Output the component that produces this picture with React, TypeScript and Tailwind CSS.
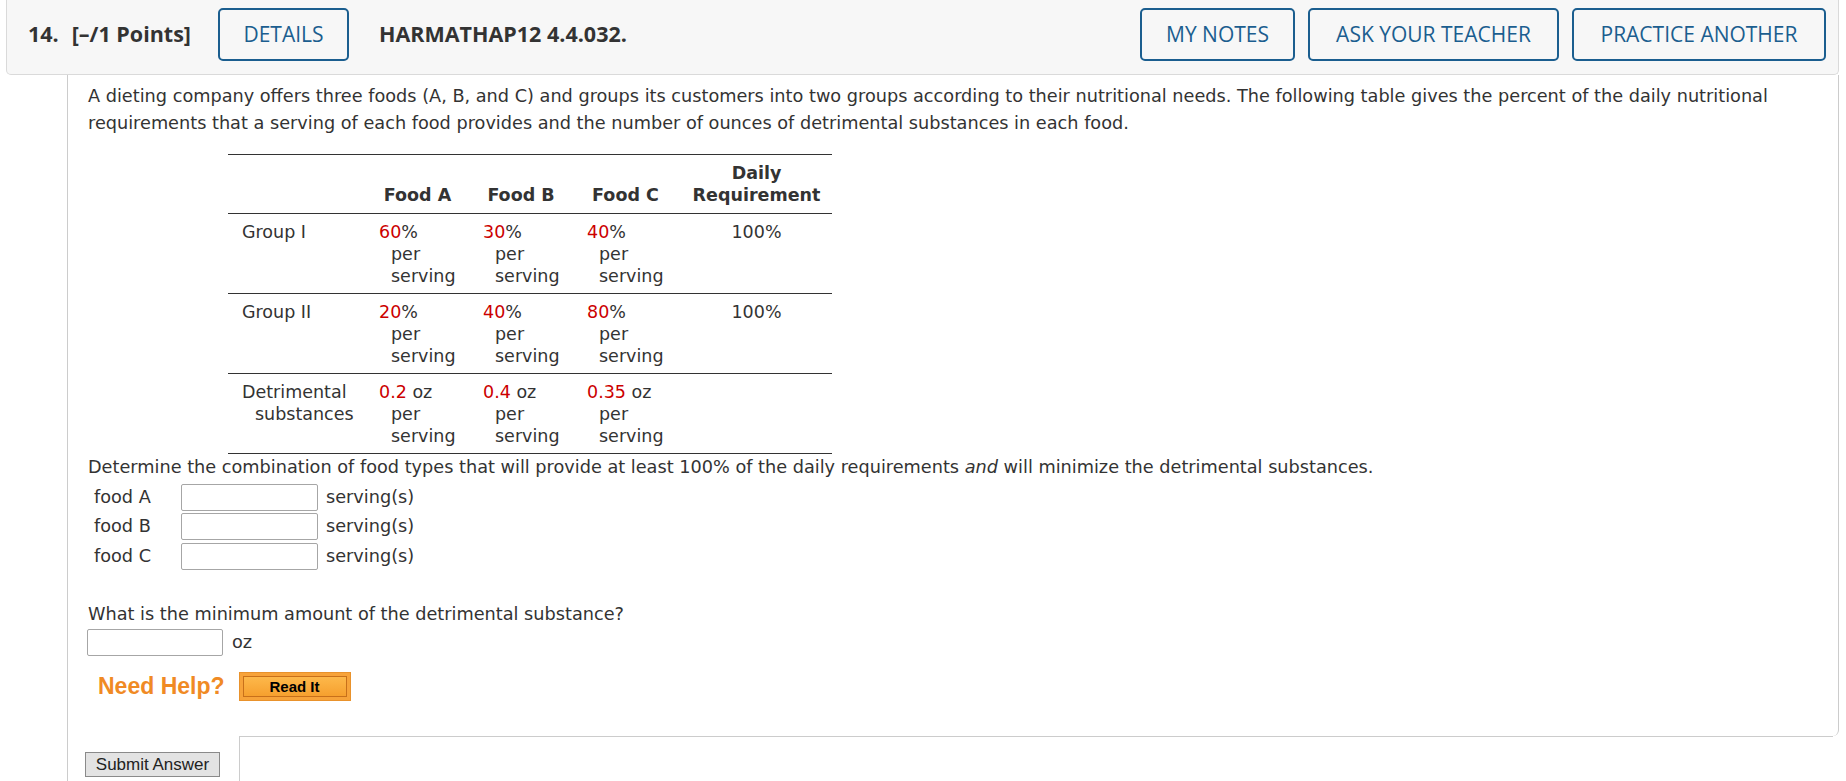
import React from "react";

const hdrBtn =
  "h-[53px] border-2 border-[#1b5e8f] rounded-[5px] text-[#1b5e8f] text-[21px] font-normal flex items-center justify-center bg-transparent";

type Row = {
  label: string[];
  vals: [string, string][];
  daily: string;
};

const rows: Row[] = [
  { label: ["Group I"], vals: [["60", "%"], ["30", "%"], ["40", "%"]], daily: "100%" },
  { label: ["Group II"], vals: [["20", "%"], ["40", "%"], ["80", "%"]], daily: "100%" },
  {
    label: ["Detrimental", "substances"],
    vals: [["0.2", " oz"], ["0.4", " oz"], ["0.35", " oz"]],
    daily: "",
  },
];

function AnswerRow({ label, gap }: { label: string; gap: string }) {
  return (
    <div className={`flex items-center h-[27px] ${gap}`}>
      <div className="w-[93px] pl-[6px]">{label}</div>
      <input
        type="text"
        className="w-[137px] h-[27px] border border-[#a6a6a6] rounded-[2px] bg-white outline-none"
      />
      <span className="ml-[8px]">serving(s)</span>
    </div>
  );
}

export default function App() {
  return (
    <div className="min-h-[781px] w-[1846px] bg-white text-[#333] overflow-hidden">
      {/* Header bar */}
      <div className="ml-[6px] mr-[7px] h-[75px] bg-[#f7f7f7] border-x border-b border-[#dadada] rounded-b-[5px] pt-[8px] pl-[21px] pr-[12px] font-['Open_Sans',sans-serif]">
        <div className="flex items-center h-[53px]">
          <span className="text-[21.5px] font-bold text-[#333]">14.</span>
          <span className="ml-[13px] text-[21.5px] font-bold text-[#333]">[–/1 Points]</span>
          <button className={`${hdrBtn} ml-[27px] w-[131px]`}>DETAILS</button>
          <span className="ml-[30px] text-[21.5px] font-bold text-[#333]">HARMATHAP12 4.4.032.</span>
          <div className="ml-auto flex gap-[13px]">
            <button className={`${hdrBtn} w-[155px]`}>MY NOTES</button>
            <button className={`${hdrBtn} w-[251px]`}>ASK YOUR TEACHER</button>
            <button className={`${hdrBtn} w-[254px]`}>PRACTICE ANOTHER</button>
          </div>
        </div>
      </div>

      {/* Question body */}
      <div className="ml-[67px] mr-[7px] border-l border-[#cccccc] font-['DejaVu_Sans',Verdana,sans-serif] text-[17.7px]">
        <div className="border-r border-[#cccccc] rounded-br-[6px] pl-[20px] pr-[40px] pt-[8px] pb-[35px]">
          <p className="leading-[27px]">
            A dieting company offers three foods (A, B, and C) and groups its customers into two groups according to
            their nutritional needs. The following table gives the percent of the daily nutritional requirements that a
            serving of each food provides and the number of ounces of detrimental substances in each food.
          </p>

          {/* Table */}
          <div className="mt-[17px] ml-[140px] w-[604px] border-t border-[#333] leading-[22px] text-[17.5px]">
            <div className="grid grid-cols-[141px_104px_104px_104px_151px] items-end border-b border-[#333] pt-[7px] pb-[7px] font-bold">
              <div />
              <div className="pl-[10px] pr-[17px] text-center">Food A</div>
              <div className="pl-[10px] pr-[18px] text-center">Food B</div>
              <div className="pl-[10px] pr-[17px] text-center">Food C</div>
              <div className="text-center">
                Daily
                <br />
                Requirement
              </div>
            </div>
            {rows.map((r, i) => (
              <div
                key={i}
                className="grid grid-cols-[141px_104px_104px_104px_151px] items-start border-b border-[#333] pt-[7px] pb-[6px]"
              >
                <div className="pl-[14px]">
                  <div>{r.label[0]}</div>
                  {r.label[1] && <div className="pl-[13px]">{r.label[1]}</div>}
                </div>
                {r.vals.map((v, j) => (
                  <div key={j} className="pl-[10px]">
                    <div>
                      <span className="text-[#cc0000]">{v[0]}</span>
                      {v[1]}
                    </div>
                    <div className="pl-[12px]">per</div>
                    <div className="pl-[12px]">serving</div>
                  </div>
                ))}
                <div className="text-center">{r.daily}</div>
              </div>
            ))}
          </div>

          <p className="leading-[27px]">
            Determine the combination of food types that will provide at least 100% of the daily requirements{" "}
            <em>and</em> will minimize the detrimental substances.
          </p>
          <div className="mt-[3px]">
            <AnswerRow label="food A" gap="mb-[2px]" />
            <AnswerRow label="food B" gap="mb-[3px]" />
            <AnswerRow label="food C" gap="" />
          </div>

          <p className="mt-[31px] leading-[27px]">What is the minimum amount of the detrimental substance?</p>
          <div className="mt-[1px] flex items-center h-[27px] -ml-px">
            <input
              type="text"
              className="w-[136px] h-[27px] border border-[#a6a6a6] rounded-[2px] bg-white outline-none"
            />
            <span className="ml-[9px]">oz</span>
          </div>

          <div className="mt-[16px] flex items-center h-[29px] font-['Liberation_Sans',Arial,sans-serif]">
            <span className="ml-[10px] text-[23px] font-bold text-[#f08a24]">Need Help?</span>
            <button className="ml-[14px] w-[112px] h-[29px] bg-[#f7a33a] border border-[#e9922c] p-[3px] flex">
              <span className="flex-1 flex items-center justify-center border border-[#c8701a] bg-gradient-to-b from-[#fdb84a] to-[#f6a02e] text-[15px] font-bold text-black leading-none">
                Read It
              </span>
            </button>
          </div>
        </div>

        <div className="flex">
          <div className="w-[171px] pl-[17px] pt-[16px]">
            <button className="w-[135px] h-[25px] bg-[#e3e3e3] border border-[#8a8a8a] text-[17px] text-[#222] leading-none font-['Liberation_Sans',Arial,sans-serif] flex items-center justify-center">
              Submit Answer
            </button>
          </div>
          <div className="flex-1 mr-[6px] h-[46px] border-l border-t border-[#cccccc]" />
        </div>
      </div>
    </div>
  );
}
